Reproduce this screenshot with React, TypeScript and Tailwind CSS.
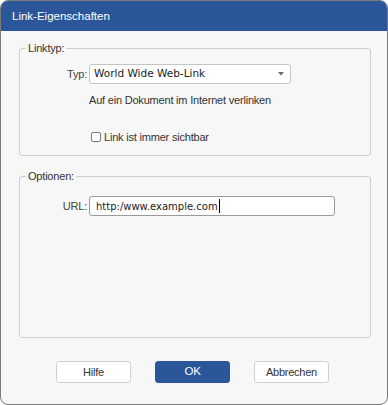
import React from "react";

const ui = { fontFamily: '"Liberation Sans", Arial, sans-serif' };
const field = { fontFamily: '"DejaVu Sans", Verdana, sans-serif' };

function Button({ label, primary }: { label: string; primary?: boolean }) {
  return (
    <button
      className={
        primary
          ? "flex h-[22px] w-[75px] items-center justify-center rounded-[3px] border border-[#2b579a] bg-[#2b579a] text-[11.5px] tracking-[-0.2px] text-white"
          : "flex h-[22px] w-[75px] items-center justify-center rounded-[3px] border border-[#cfcfcf] bg-white text-[11px] tracking-[-0.25px] text-[#333]"
      }
      style={ui}
    >
      {label}
    </button>
  );
}

export default function App() {
  return (
    <div className="h-[405px] w-[388px] bg-white">
      <div
        className="flex h-[405px] w-[388px] flex-col overflow-hidden rounded-[8px] border border-[#7a7a7a] bg-[#f7f7f7]"
        style={ui}
      >
        <div className="flex h-[30px] shrink-0 items-center bg-[#2b579a] pl-[11px] pt-[2px] text-[11.5px] text-white">
          Link-Eigenschaften
        </div>

        <fieldset className="ml-[18px] mt-[9px] h-[116px] w-[352px] rounded-[3px] border border-[#cfcfcf]">
          <legend className="ml-[6px] px-[2px] text-[11px] leading-[16px] tracking-[-0.2px] text-[#333]">
            Linktyp:
          </legend>
          <div className="mt-[8px] flex h-[20px] items-center">
            <span className="w-[69px] pr-[2px] text-right text-[11px] tracking-[-0.2px] text-[#444]">Typ:</span>
            <div className="flex h-[20px] w-[202px] items-center justify-between rounded-[3px] border border-[#c4c4c4] bg-white pl-[4px] pr-[6px]">
              <span className="text-[10.5px] text-[#222]" style={field}>
                World Wide Web-Link
              </span>
              <svg width="6" height="4" viewBox="0 0 6 4">
                <path d="M0 0h6L3 3.5z" fill="#6b6b6b" />
              </svg>
            </div>
          </div>
          <div className="ml-[69px] mt-[8px] text-[11px] leading-[16px] tracking-[-0.2px] text-[#333]">
            Auf ein Dokument im Internet verlinken
          </div>
          <div className="ml-[71px] mt-[21px] flex items-center gap-[3px] text-[11px] leading-[16px] tracking-[-0.2px] text-[#333]">
            <span className="h-[10px] w-[10px] rounded-[2px] border border-[#7a7a7a] bg-white" />
            Link ist immer sichtbar
          </div>
        </fieldset>

        <fieldset className="ml-[18px] mt-[12px] h-[170px] w-[352px] rounded-[3px] border border-[#cfcfcf]">
          <legend className="ml-[6px] px-[2px] text-[11px] leading-[16px] tracking-[-0.2px] text-[#333]">
            Optionen:
          </legend>
          <div className="mt-[12px] flex h-[20px] items-center">
            <span className="w-[69px] pr-[2px] text-right text-[11px] tracking-[-0.2px] text-[#444]">URL:</span>
            <div className="flex h-[20px] w-[246px] items-center rounded-[3px] border border-[#9a9a9a] bg-white pl-[6px]">
              <span className="text-[10px] text-[#222]" style={field}>
                http:/www.example.com
              </span>
              <span className="ml-[1px] h-[14px] w-[1px] bg-black" />
            </div>
          </div>
        </fieldset>

        <div className="mt-[23px] flex gap-[24px] pl-[55px]">
          <Button label="Hilfe" />
          <Button label="OK" primary />
          <Button label="Abbrechen" />
        </div>
      </div>
    </div>
  );
}
